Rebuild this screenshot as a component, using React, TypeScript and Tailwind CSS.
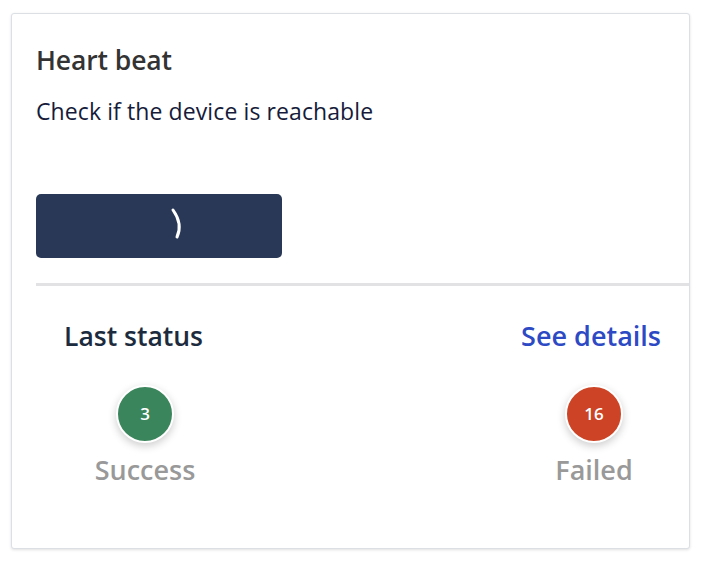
import React from "react";

export default function App() {
  return (
    <div className="w-[710px] h-[568px] bg-white pt-[13px] pl-[11px]" style={{ fontFamily: "'Open Sans', 'Noto Sans', sans-serif" }}>
      <div className="w-[679px] h-[536px] bg-white border border-[#dcdfe4] rounded-[3px] shadow-[0_1px_3px_rgba(0,0,0,0.12)] flex flex-col">
        <div className="pl-[24px] pt-[30px]">
          <div className="text-[26.5px] leading-[32px] font-semibold text-[#333333] tracking-[-0.1px]">Heart beat</div>
          <div className="mt-[20px] text-[23px] leading-[30px] text-[#161b3a] tracking-[0.1px]">Check if the device is reachable</div>
          <button className="mt-[68px] w-[246px] h-[64px] bg-[#2a3858] rounded-[5px] block">
            <svg width="246" height="64" viewBox="0 0 246 64" className="block">
              <path d="M137 16 Q147 30 141 43" stroke="white" strokeWidth="3" fill="none" strokeLinecap="round" />
            </svg>
          </button>
        </div>
        <div className="ml-[24px] mt-[25px] h-[3px] bg-[#e2e2e4]" />
        <div className="pl-[52px] pr-[28px] pt-[34px] flex justify-between items-center">
          <div className="text-[26.5px] leading-[32px] font-semibold text-[#1c2b3d]">Last status</div>
          <div className="text-[27px] leading-[32px] font-semibold text-[#2d4ac4]">See details</div>
        </div>
        <div className="pl-[73px] pr-[35px] mt-[33px] flex justify-between">
          <div className="w-[120px] flex flex-col items-center">
            <div className="w-[58px] h-[58px] rounded-full bg-[#3b855c] border-2 border-white shadow-[0_3px_8px_rgba(0,0,0,0.2)] flex items-center justify-center text-white font-semibold text-[17px]">3</div>
            <div className="mt-[12px] text-[27px] leading-[30px] font-semibold text-[#999999]">Success</div>
          </div>
          <div className="w-[120px] flex flex-col items-center">
            <div className="w-[58px] h-[58px] rounded-full bg-[#cc4425] border-2 border-white shadow-[0_3px_8px_rgba(0,0,0,0.2)] flex items-center justify-center text-white font-semibold text-[17px]">16</div>
            <div className="mt-[12px] text-[27px] leading-[30px] font-semibold text-[#999999]">Failed</div>
          </div>
        </div>
      </div>
    </div>
  );
}
